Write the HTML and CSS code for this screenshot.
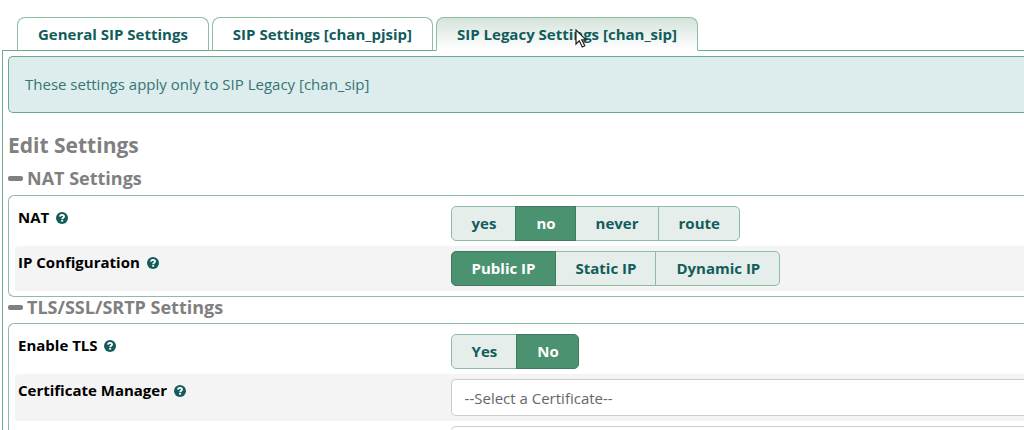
FILE: index.html
```html
<!DOCTYPE html>
<html lang="en">
<head>
  <meta charset="UTF-8">
  <meta name="viewport" content="width=device-width, initial-scale=1.0">
  <title>SIP Settings</title>
  <link rel="stylesheet" href="styles.css">
</head>
<body>
  <svg class="sprite" aria-hidden="true">
    <symbol id="help" viewBox="0 0 12 12">
      <circle cx="6" cy="6" r="6" fill="#125c5c"/>
      <path d="M4 4.600C4.100 3.400 4.900 2.900 6 2.900c1.200 0 2 .6 2 1.600C8 5.700 6.200 5.700 6.200 7.200" fill="none" stroke="#fff" stroke-width="1.900"/>
      <rect x="5.200" y="8" width="1.900" height="1.700" fill="#fff"/>
    </symbol>
  </svg>

  <nav class="tabs">
    <a class="tab" href="#general">General SIP Settings</a>
    <a class="tab" href="#pjsip">SIP Settings [chan_pjsip]</a>
    <a class="tab active" href="#legacy">SIP Legacy Settings [chan_sip]</a>
    <svg class="pointer" viewBox="0 0 12 19" aria-hidden="true">
      <path d="M1 1v14l3.300-3.200 3 6.200 2.500-1.200-3-6H11z" fill="#fff" stroke="#222" stroke-width="1.200"/>
    </svg>
  </nav>

  <main class="panel" id="legacy">
    <div class="alert">These settings apply only to SIP Legacy [chan_sip]</div>

    <form>
      <h2>Edit Settings</h2>

      <h3><span class="minus"></span>NAT Settings</h3>
      <div class="section">
        <div class="row">
          <div class="name" id="nat-label">NAT <svg class="help"><use href="#help"/></svg></div>
          <div class="radioset" role="radiogroup" aria-labelledby="nat-label">
            <input type="radio" name="nat" id="nat-yes"><label for="nat-yes">yes</label>
            <input type="radio" name="nat" id="nat-no" checked><label for="nat-no">no</label>
            <input type="radio" name="nat" id="nat-never"><label for="nat-never">never</label>
            <input type="radio" name="nat" id="nat-route"><label for="nat-route">route</label>
          </div>
        </div>
        <div class="row shaded">
          <div class="name" id="ip-label">IP Configuration <svg class="help"><use href="#help"/></svg></div>
          <div class="radioset" role="radiogroup" aria-labelledby="ip-label">
            <input type="radio" name="ip" id="ip-public" checked><label for="ip-public">Public IP</label>
            <input type="radio" name="ip" id="ip-static"><label for="ip-static">Static IP</label>
            <input type="radio" name="ip" id="ip-dynamic"><label for="ip-dynamic">Dynamic IP</label>
          </div>
        </div>
      </div>

      <h3><span class="minus"></span>TLS/SSL/SRTP Settings</h3>
      <div class="section">
        <div class="row">
          <div class="name" id="tls-label">Enable TLS <svg class="help"><use href="#help"/></svg></div>
          <div class="radioset" role="radiogroup" aria-labelledby="tls-label">
            <input type="radio" name="tls" id="tls-yes"><label for="tls-yes">Yes</label>
            <input type="radio" name="tls" id="tls-no" checked><label for="tls-no">No</label>
          </div>
        </div>
        <div class="row shaded">
          <label class="name" for="cert">Certificate Manager <svg class="help"><use href="#help"/></svg></label>
          <select id="cert">
            <option>--Select a Certificate--</option>
          </select>
        </div>
        <div class="row">
          <div class="name"></div>
          <select aria-label="Method"></select>
        </div>
      </div>
    </form>
  </main>
</body>
</html>
```

FILE: styles.css
```css
* {
  box-sizing: border-box;
}

html {
  overflow: hidden;
}

body {
  margin: 0;
  padding: 17px 0 0 2px;
  background-color: #fff;
  color: #000;
  font-family: "Open Sans", sans-serif;
  font-size: 15px;
  line-height: 20px;
}

.sprite {
  display: none;
}

/* Tabs */
.tabs {
  position: relative;
  display: flex;
  gap: 3px;
  padding-left: 15px;
}

.tab {
  height: 34px;
  padding: 6px 20px;
  border: 1px solid #8dbda5;
  border-bottom-color: #6bab8c;
  border-radius: 8px 8px 0 0;
  color: #125c5c;
  font-weight: bold;
  text-decoration: none;
  white-space: nowrap;
}

.tab.active {
  z-index: 1;
  border-bottom-color: #fff;
  background: linear-gradient(#d5e3db, #fff);
}

/* mouse pointer lying over the active tab */
.pointer {
  position: absolute;
  z-index: 2;
  top: 12px;
  left: 573px;
  width: 12px;
  height: 19px;
}

.panel {
  margin-top: -1px;
  padding: 5px 0 0 5px;
  border-top: 1px solid #6bab8c;
  border-left: 1px solid #6bab8c;
}

.alert {
  padding: 17px 16px 18px;
  border: 1px solid #6bab8c;
  border-right: 0;
  border-radius: 5px 0 0 5px;
  background-color: #ddecec;
  color: #357575;
}

h2,
h3 {
  margin: 0;
  color: #808080;
  font-weight: bold;
}

h2 {
  margin-top: 16px;
  font-size: 21px;
  line-height: 32px;
}

h3 {
  display: flex;
  align-items: center;
  padding-bottom: 6px;
  font-size: 18px;
  line-height: 20px;
}

h2 + h3 {
  padding-bottom: 0;
  line-height: 34px;
}

.minus {
  width: 15px;
  height: 5px;
  margin-right: 4px;
  border-radius: 2px;
  background-color: #808080;
}

/* Settings */
.section {
  padding: 5px 0 5px 6px;
  border: 1px solid #8dbda5;
  border-right: 0;
  border-radius: 6px 0 0 6px;
}

.row {
  display: grid;
  grid-template-columns: 43% 1fr;
  padding: 5px 0 5px 3px;
  border-radius: 3px 0 0 3px;
}

.shaded {
  background-color: #f4f4f4;
}

.name {
  padding-top: 1px;
  font-weight: bold;
}

.help {
  width: 12px;
  height: 12px;
  margin-left: 3px;
  vertical-align: -1px;
}

.radioset {
  display: flex;
}

.radioset input {
  position: absolute;
  opacity: 0;
}

.radioset label {
  height: 35px;
  margin-right: -1px;
  padding: 6px 19px 7px 20px;
  border: 1px solid #8dbda5;
  background-color: #e5eeea;
  color: #125c5c;
  font-weight: bold;
  cursor: pointer;
}

.radioset label:first-of-type {
  border-radius: 5px 0 0 5px;
}

.radioset label:last-of-type {
  border-radius: 0 5px 5px 0;
}

.radioset input:checked + label {
  z-index: 1;
  border-color: #3f7a5e;
  background-color: #4b9270;
  color: #fff;
}

select {
  width: 100%;
  height: 37px;
  padding: 0 13px;
  border: 1px solid #ccc;
  border-right: 0;
  border-radius: 5px 0 0 5px;
  background-color: #fff;
  color: #666;
  font-family: inherit;
  font-size: 15px;
  appearance: none;
}
```
